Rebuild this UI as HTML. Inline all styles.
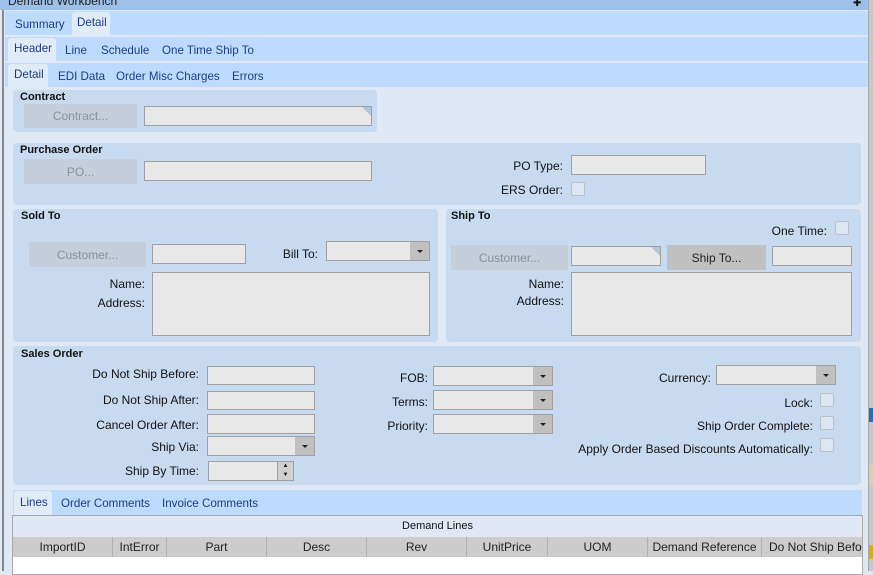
<!DOCTYPE html>
<html><head><style>
*{box-sizing:border-box;margin:0;padding:0}
body{width:873px;height:571px;overflow:hidden;background:#dfe8f4;font-family:"Liberation Sans",sans-serif;font-size:12px;color:#111;position:relative}
div,span{position:absolute}
.tr{background:#bddbff;left:5px;width:863px}
.t{color:#1e3c82;font-size:11.6px;white-space:nowrap}
.ta{background:#e0ebf8;border-radius:3px 3px 0 0}
.g{background:#c8daf0;border-radius:4px}
.gl{font-weight:bold;font-size:11px}
.btn{background:#c5ceda;color:#8a8f98;text-align:center}
.f{background:#e8e8e8;border:1px solid #a0a0a0}
.l{text-align:right;white-space:nowrap;margin-top:1px}
.cb{width:14px;height:14px;border:1px solid #b8c0c8;border-radius:2px;background:#dce6f2}
.arr{position:absolute;right:0;top:0;bottom:0;width:19px;background:#c0c0c0}
.arr:after{content:"";position:absolute;left:7px;top:8px;border:3px solid transparent;border-top:3px solid #222;border-bottom:0}
.ch{top:537px;height:20px;background:#cccccc;border-right:1px solid #b0b0b0;text-align:center;line-height:20px;color:#222}
</style></head><body>
<div style="left:0;top:0;width:6px;height:571px;background:#e6e8ec"></div>
<div style="left:2px;top:0;width:2px;height:571px;background:#7c8aa2"></div>
<div style="left:0;top:0;width:868px;height:10px;background:#9dc0e8"></div>
<div style="left:8px;top:-6px;color:#222;font-size:12px">Demand Workbench</div>
<div style="left:853px;top:-2px;font-size:10px">✚</div>
<div style="left:868px;top:0;width:5px;height:571px;background:#c8c8c8"></div>
<div style="left:868px;top:0;width:1px;height:571px;background:#a8a8a8"></div>
<div style="left:869px;top:408px;width:4px;height:14px;background:#2070c0"></div>
<div style="left:869px;top:465px;width:4px;height:20px;background:#d8d0b8"></div>
<div style="left:869px;top:545px;width:4px;height:14px;background:#d8b000"></div>

<div class="tr" style="top:11px;height:24px"></div>
<div class="ta" style="left:72px;top:12px;width:38px;height:23px"></div>
<div class="t" style="left:15px;top:18px">Summary</div>
<div class="t" style="left:77px;top:16px">Detail</div>
<div class="tr" style="top:37px;height:24px"></div>
<div class="ta" style="left:8px;top:38px;width:48px;height:23px"></div>
<div class="t" style="left:14px;top:42px">Header</div>
<div class="t" style="left:65px;top:44px">Line</div>
<div class="t" style="left:101px;top:44px">Schedule</div>
<div class="t" style="left:162px;top:44px">One Time Ship To</div>
<div class="tr" style="top:63px;height:24px"></div>
<div class="ta" style="left:8px;top:64px;width:40px;height:23px"></div>
<div class="t" style="left:14px;top:68px">Detail</div>
<div class="t" style="left:58px;top:70px">EDI Data</div>
<div class="t" style="left:116px;top:70px">Order Misc Charges</div>
<div class="t" style="left:232px;top:70px">Errors</div>

<div class="g" style="left:13px;top:90px;width:364px;height:42px"></div>
<div class="gl" style="left:20px;top:91px">Contract</div>
<div class="btn" style="left:24px;top:104px;width:113px;height:24px;line-height:25px">Contract...</div>
<div class="f" style="left:144px;top:106px;width:228px;height:20px"></div>
<div style="left:362px;top:107px;border-top:9px solid #b0c4dc;border-left:9px solid transparent"></div>

<div class="g" style="left:13px;top:143px;width:848px;height:62px"></div>
<div class="gl" style="left:20px;top:144px">Purchase Order</div>
<div class="btn" style="left:24px;top:159px;width:113px;height:25px;line-height:26px">PO...</div>
<div class="f" style="left:144px;top:161px;width:228px;height:20px"></div>
<div class="l" style="left:463px;width:100px;top:158px">PO Type:</div>
<div class="f" style="left:571px;top:155px;width:135px;height:20px"></div>
<div class="l" style="left:463px;width:100px;top:182px">ERS Order:</div>
<div class="cb" style="left:571px;top:182px"></div>

<div class="g" style="left:13px;top:209px;width:425px;height:133px"></div>
<div class="gl" style="left:21px;top:210px">Sold To</div>
<div class="btn" style="left:29px;top:242px;width:117px;height:25px;line-height:26px">Customer...</div>
<div class="f" style="left:152px;top:244px;width:94px;height:20px"></div>
<div class="l" style="left:250px;width:68px;top:246px">Bill To:</div>
<div class="f" style="left:326px;top:241px;width:104px;height:20px"><span class="arr"></span></div>
<div class="l" style="left:60px;width:85px;top:276px">Name:</div>
<div class="l" style="left:60px;width:85px;top:295px">Address:</div>
<div class="f" style="left:152px;top:272px;width:278px;height:64px"></div>

<div class="g" style="left:446px;top:209px;width:415px;height:133px"></div>
<div class="gl" style="left:451px;top:210px">Ship To</div>
<div class="l" style="left:730px;width:97px;top:223px">One Time:</div>
<div class="cb" style="left:835px;top:221px"></div>
<div class="btn" style="left:451px;top:245px;width:117px;height:25px;line-height:26px">Customer...</div>
<div class="f" style="left:571px;top:246px;width:90px;height:20px"></div>
<div style="left:651px;top:247px;border-top:9px solid #b0c4dc;border-left:9px solid transparent"></div>
<div class="btn" style="left:667px;top:245px;width:99px;height:25px;line-height:26px;background:#c0c0c0;color:#222">Ship To...</div>
<div class="f" style="left:772px;top:246px;width:80px;height:20px"></div>
<div class="l" style="left:480px;width:84px;top:276px">Name:</div>
<div class="l" style="left:480px;width:84px;top:293px">Address:</div>
<div class="f" style="left:571px;top:272px;width:281px;height:64px"></div>

<div class="g" style="left:13px;top:346px;width:848px;height:139px"></div>
<div class="gl" style="left:21px;top:348px">Sales Order</div>
<div class="l" style="left:40px;width:159px;top:366px">Do Not Ship Before:</div>
<div class="f" style="left:207px;top:366px;width:108px;height:19px"></div>
<div class="l" style="left:40px;width:159px;top:392px">Do Not Ship After:</div>
<div class="f" style="left:207px;top:391px;width:108px;height:19px"></div>
<div class="l" style="left:40px;width:159px;top:417px">Cancel Order After:</div>
<div class="f" style="left:207px;top:414px;width:108px;height:20px"></div>
<div class="l" style="left:40px;width:159px;top:439px">Ship Via:</div>
<div class="f" style="left:207px;top:436px;width:108px;height:20px"><span class="arr"></span></div>
<div class="l" style="left:40px;width:159px;top:463px">Ship By Time:</div>
<div class="f" style="left:208px;top:461px;width:86px;height:20px"><span style="right:0;top:0;width:16px;height:18px;background:#d0d0d0;border-left:1px solid #a0a0a0;font-size:6px;line-height:9px;text-align:center">▲<br>▼</span></div>

<div class="l" style="left:330px;width:98px;top:370px">FOB:</div>
<div class="f" style="left:433px;top:366px;width:120px;height:20px"><span class="arr"></span></div>
<div class="l" style="left:330px;width:98px;top:394px">Terms:</div>
<div class="f" style="left:433px;top:390px;width:120px;height:20px"><span class="arr"></span></div>
<div class="l" style="left:330px;width:98px;top:418px">Priority:</div>
<div class="f" style="left:433px;top:414px;width:120px;height:20px"><span class="arr"></span></div>

<div class="l" style="left:600px;width:111px;top:370px">Currency:</div>
<div class="f" style="left:716px;top:365px;width:120px;height:20px"><span class="arr"></span></div>
<div class="l" style="left:600px;width:213px;top:395px">Lock:</div>
<div class="cb" style="left:820px;top:393px"></div>
<div class="l" style="left:560px;width:253px;top:418px">Ship Order Complete:</div>
<div class="cb" style="left:820px;top:416px"></div>
<div class="l" style="left:500px;width:313px;top:441px">Apply Order Based Discounts Automatically:</div>
<div class="cb" style="left:820px;top:438px"></div>

<div style="left:13px;top:490px;width:849px;height:25px;background:#bddbff"></div>
<div class="ta" style="left:14px;top:491px;width:38px;height:24px"></div>
<div class="t" style="left:20px;top:496px">Lines</div>
<div class="t" style="left:61px;top:497px">Order Comments</div>
<div class="t" style="left:162px;top:497px">Invoice Comments</div>
<div style="left:12px;top:515px;width:851px;height:60px;background:#fff;border:1px solid #a8a8a8"></div>
<div style="left:13px;top:516px;width:849px;height:21px;background:#dfe8f4;text-align:center;line-height:21px;font-size:11px">Demand Lines</div>
<div class="ch" style="left:13px;width:100px">ImportID</div>
<div class="ch" style="left:113px;width:54px">IntError</div>
<div class="ch" style="left:167px;width:100px">Part</div>
<div class="ch" style="left:267px;width:100px">Desc</div>
<div class="ch" style="left:367px;width:100px">Rev</div>
<div class="ch" style="left:467px;width:81px">UnitPrice</div>
<div class="ch" style="left:548px;width:100px">UOM</div>
<div class="ch" style="left:648px;width:114px">Demand Reference</div>
<div class="ch" style="left:762px;width:100px;overflow:hidden;white-space:nowrap;text-align:left;padding-left:7px;border-right:0">Do Not Ship Before</div>
</body></html>
